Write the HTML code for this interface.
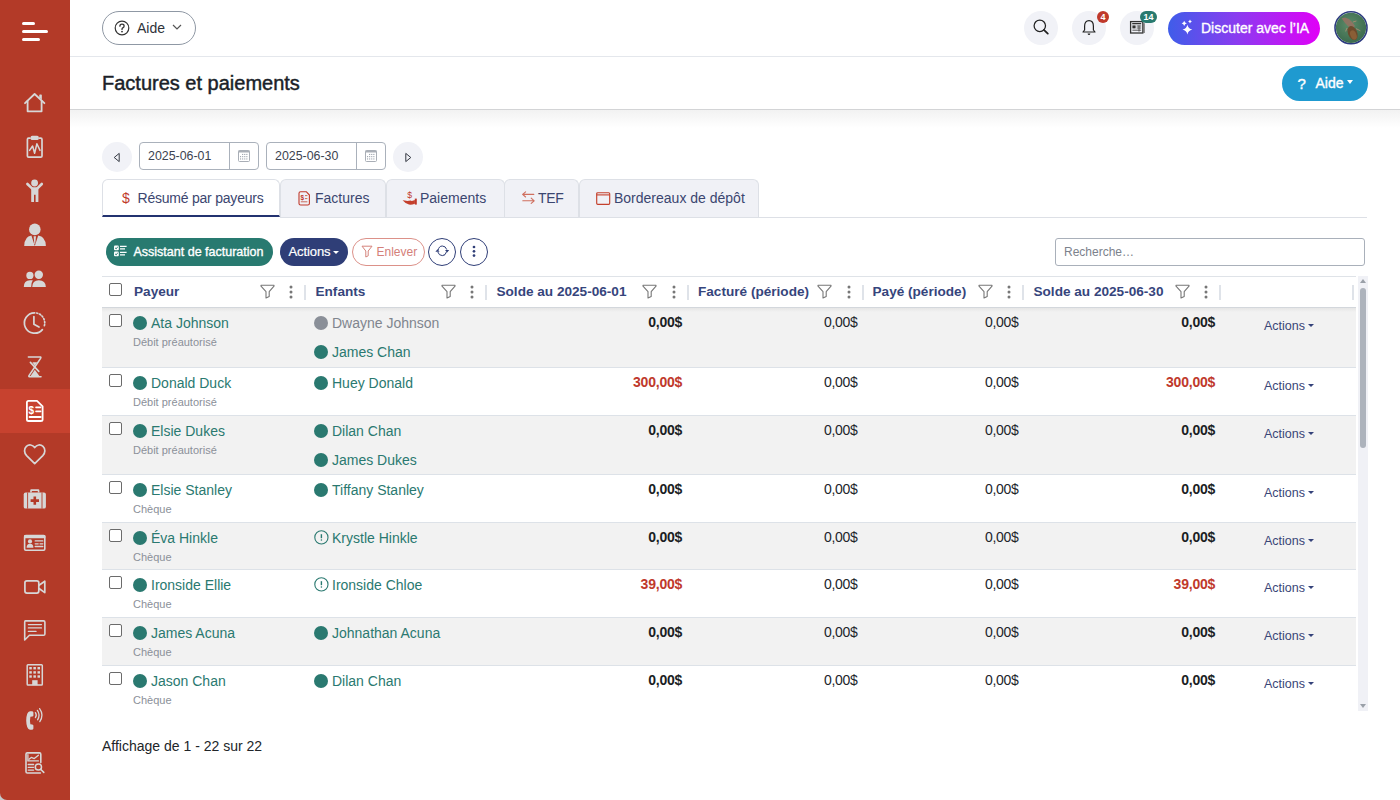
<!DOCTYPE html>
<html lang="fr">
<head>
<meta charset="utf-8">
<title>Factures et paiements</title>
<style>
*{box-sizing:border-box;margin:0;padding:0}
html,body{width:1400px;height:800px;overflow:hidden;background:#fff;font-family:"Liberation Sans",sans-serif;color:#212529}
.a{position:absolute}
.t{position:absolute;white-space:nowrap;line-height:1}
#sb{position:absolute;left:0;top:0;width:70px;height:800px;background:#b33a28;overflow:hidden;border-bottom-left-radius:7px}
#sb .on{position:absolute;left:0;top:389px;width:70px;height:44px;background:#c7422f}
.hdr{position:absolute;left:70px;top:0;width:1330px;height:57px;border-bottom:1px solid #e4e7ec;background:#fff}
.titlebar{position:absolute;left:70px;top:57px;width:1330px;height:53px;border-bottom:1px solid #d3d4d6;background:#fff}
.shadow{position:absolute;left:70px;top:110px;width:1330px;height:18px;background:linear-gradient(#f2f2f2,rgba(255,255,255,0))}
.circ{position:absolute;width:34px;height:34px;border-radius:50%;background:#f1f2f7}
.badge{position:absolute;height:12px;border-radius:6px;color:#fff;font-size:9px;font-weight:bold;line-height:12px;text-align:center}
/* date row */
.navc{position:absolute;width:30px;height:30px;border-radius:50%;background:#f1f2f7;top:142px}
.din{position:absolute;top:142px;height:28px;width:120px;border:1px solid #aab1bb;border-radius:4px;background:#fff}
.din .v{position:absolute;left:8px;top:7px;font-size:12.4px;color:#3c4350;line-height:1}
.din .dv{position:absolute;left:89px;top:0;width:1px;height:26px;background:#aab1bb}
.din svg{position:absolute;left:98px;top:7px}
/* tabs */
.tab{position:absolute;top:179px;height:38px;border:1px solid #dde0e6;border-bottom:none;border-radius:6px 6px 0 0;background:#f0f1f6;font-size:14px;color:#3b4670}
.tab .lab{position:absolute;top:11px;white-space:nowrap;line-height:1}
.tab svg{position:absolute}
.tabline{position:absolute;left:280px;top:217px;width:1087px;height:1px;background:#dde0e6;z-index:2}
/* toolbar */
.btn{position:absolute;top:238px;height:28px;border-radius:14px}
/* table */
.tbl{position:absolute;left:102px;top:276px;width:1254px;height:435px;overflow:hidden}
.thead{position:absolute;left:0;top:0;width:1254px;height:32px;border-top:1px solid #dfe3e8;border-bottom:1px solid #d3d7dc;background:#fff}
.thead .hl{position:absolute;top:7.7px;font-size:13.6px;font-weight:bold;color:#36457c;white-space:nowrap;line-height:1}
.thead .fi{position:absolute;top:7px}
.thead .dt{position:absolute;top:8px}
.thead .sep{position:absolute;top:8px;width:2px;height:15px;background:#dfe3e9}
.tshadow{position:absolute;left:0;top:32px;width:1254px;height:4px;background:linear-gradient(rgba(0,0,0,0.05),rgba(0,0,0,0));z-index:3}
.body{position:absolute;left:0;top:31px;width:1254px}
.row{position:absolute;left:0;width:1254px;border-bottom:1px solid #dde2e8}
.cb{position:absolute;left:7px;width:13px;height:13px;border:1px solid #6b6b6b;border-radius:2px;background:#fff}
.dot{position:absolute;width:14px;height:14px;border-radius:50%;background:#2a7970}
.warn{position:absolute}
.nm{position:absolute;font-size:14px;color:#2a7970;white-space:nowrap;line-height:1}
.meth{position:absolute;font-size:11px;color:#8b9099;white-space:nowrap;line-height:1}
.num{position:absolute;top:7px;font-size:14px;color:#22252b;white-space:nowrap;line-height:1;letter-spacing:-0.35px;margin-right:-0.35px}
.num.b{font-weight:bold;letter-spacing:-0.2px;margin-right:-0.2px}
.act{position:absolute;left:1162px;top:11.5px;font-size:12.5px;color:#3a4677;white-space:nowrap;line-height:1}
.caret{display:inline-block;margin-left:2.6px;vertical-align:2.5px;width:0;height:0;border-left:3.5px solid transparent;border-right:3.5px solid transparent;border-top:3.8px solid #34427a}
.sbar{position:absolute;left:1358px;top:276px;width:10px;height:435px;background:#f0f1f6}
</style>
</head>
<body>
<div class="a" style="left:0;top:790px;width:10px;height:10px;background:#c5cacd"></div>
<div id="sb">
  <div class="on"></div>
<svg width="70" height="800" viewBox="0 0 70 800" style="position:absolute;left:0;top:0" fill="none" stroke="#d7d7d7" stroke-linecap="round" stroke-linejoin="round">
  <!-- hamburger -->
  <g stroke="#fff" stroke-width="3">
    <line x1="23.5" y1="23.5" x2="33.5" y2="23.5"/>
    <line x1="23.5" y1="31.5" x2="46.5" y2="31.5"/>
    <line x1="23.5" y1="39.5" x2="38.5" y2="39.5"/>
  </g>
  <!-- home -->
  <g stroke-width="1.8">
    <path d="M25 103.2 L34.6 94 L44.4 103.2"/>
    <path d="M27.6 101 V111.3 H41.6 V101"/>
    <path d="M39.9 97.5 V95.2 H41.2 V98.8" fill="#d7d7d7" stroke-width="1.2"/>
  </g>
  <!-- clipboard pulse -->
  <g stroke-width="1.7">
    <path d="M30 138.2 H28.6 Q27.4 138.2 27.4 139.4 V156 Q27.4 157.1 28.6 157.1 H40.8 Q42 157.1 42 156 V139.4 Q42 138.2 40.8 138.2 H39.4"/>
    <rect x="31.4" y="136.6" width="6.6" height="2.6" rx="0.8" fill="#d7d7d7"/>
    <path d="M29.6 150.4 L32.6 146 L34.6 153.2 L36.9 143.8 L40 150.4" stroke-width="1.5"/>
  </g>
  <!-- person arms up -->
  <g fill="#d7d7d7" stroke="none">
    <circle cx="34.6" cy="183" r="3.4"/>
    <path d="M31.2 187.2 H38.4 V201.4 Q38.4 202 37.8 202 H35.6 V194.8 H34 V202 H31.8 Q31.2 202 31.2 201.4Z"/>
  </g>
  <g stroke="#d7d7d7" stroke-width="2.6">
    <path d="M27.4 184 L32 188.4"/>
    <path d="M41.8 184 L37.4 188.4"/>
  </g>
  <!-- user tie -->
  <g fill="#d7d7d7" stroke="none">
    <circle cx="34.8" cy="229.4" r="5.8"/>
    <path d="M24.2 245.9 Q24.6 236.4 31.4 235.6 L34.8 245.9 L38.2 235.6 Q45.4 236.4 45.9 245.9Z"/>
    <path d="M33.6 236.2 H36 L35.2 244 H34.4Z"/>
  </g>
  <!-- users -->
  <g fill="#d7d7d7" stroke="none">
    <circle cx="29.9" cy="275.4" r="3.6"/>
    <circle cx="38.8" cy="274.8" r="4.2"/>
    <path d="M23.8 286.9 Q23.8 280.4 30 280.2 H32.8 Q31.2 282.4 31.2 286.9Z"/>
    <path d="M32.2 286.9 Q32.4 280.3 38.8 280.2 Q45.6 280.3 45.9 286.9Z"/>
  </g>
  <!-- clock -->
  <g stroke-width="1.7">
    <path d="M34.6 312.8 A10.2 10.2 0 1 0 42.4 329.6"/>
    <path d="M36.6 313 A10.2 10.2 0 0 1 44.4 325.6" stroke-dasharray="1.2 1.9"/>
    <path d="M33.9 316.6 V324.2 L39 327"/>
  </g>
  <!-- hourglass -->
  <g stroke-width="1.6">
    <path d="M28.4 357 H40.6 Q41.2 357.4 40.6 358.4 L29 375.6 Q28.6 376.6 29.4 376.8 H41"/>
    <path d="M30.4 362.4 L38.8 371.4"/>
  </g>
  <g fill="#d7d7d7" stroke="none">
    <path d="M32.4 362.2 H37.2 L34.8 365.8Z"/>
    <path d="M34.8 369.8 L39.4 376 H30.6Z"/>
  </g>
  <!-- invoice active -->
  <g stroke="#fff" stroke-width="1.8">
    <path d="M37 400.9 H28.6 Q26.9 400.9 26.9 402.6 V419.4 Q26.9 421 28.6 421 H40.8 Q42.6 421 42.6 419.4 V406.4Z"/>
    <path d="M36 407.4 H40.6 M36 411.4 H40.6" stroke-width="1.6"/>
    <path d="M29.6 417 H40.6" stroke-width="2"/>
  </g>
  <text x="31.4" y="414" fill="#fff" stroke="none" font-family="Liberation Sans" font-weight="bold" font-size="10" text-anchor="middle">$</text>
  <!-- heart -->
  <path stroke-width="1.7" d="M34.7 447.6 C32.6 444.4 28.8 444.2 26.4 446.4 C23.8 448.8 24 452.8 26.6 455.6 L34.7 463.6 L42.8 455.6 C45.4 452.8 45.6 448.8 43 446.4 C40.6 444.2 36.8 444.4 34.7 447.6Z"/>
  <!-- medkit -->
  <g fill="#d7d7d7" stroke="none">
    <path d="M30.2 492.6 V490.4 Q30.2 489.3 31.3 489.3 H38.3 Q39.4 489.3 39.4 490.4 V492.6 H37.8 V491 H31.8 V492.6Z"/>
    <path d="M25.6 492.5 H44 Q45.9 492.5 45.9 494.4 V506.7 Q45.9 508.6 44 508.6 H25.6 Q23.7 508.6 23.7 506.7 V494.4 Q23.7 492.5 25.6 492.5Z"/>
  </g>
  <g stroke="#b33a28" stroke-linecap="butt">
    <path d="M27.6 492.5 V508.6 M42 492.5 V508.6" stroke-width="0.9"/>
    <path d="M34.8 496.4 V504.8 M30.6 500.6 H39" stroke-width="2.6"/>
  </g>
  <!-- id card -->
  <g stroke-width="1.6">
    <rect x="24.6" y="535.6" width="20.2" height="14.6" rx="1.2"/>
  </g>
  <g fill="#d7d7d7" stroke="none">
    <rect x="24" y="535" width="21.4" height="3.2" rx="1"/>
    <circle cx="30" cy="541.4" r="2.1"/>
    <path d="M26.6 547.8 Q26.6 543.8 30 543.8 Q33.4 543.8 33.4 547.8Z"/>
  </g>
  <g stroke-width="1.3">
    <path d="M35.2 540.9 H42.8 M35.2 543.8 H38.2 M40 543.8 H42.8 M35.2 546.5 H42.8"/>
  </g>
  <!-- video -->
  <g stroke-width="1.7">
    <rect x="24.9" y="580.8" width="13.9" height="12.3" rx="2"/>
    <path d="M39.4 585 L44.8 581.2 V592.6 L39.4 588.8"/>
  </g>
  <!-- chat -->
  <g stroke-width="1.6">
    <path d="M25.4 620.9 H43.6 Q44.9 620.9 44.9 622.2 V634 Q44.9 635.3 43.6 635.3 H29.4 L24.7 640 V622.2 Q24.7 620.9 25.4 620.9Z"/>
    <path d="M28.4 624.6 H41.4 M28.4 627.9 H41.4 M28.4 631.4 H36" stroke-width="1.4"/>
  </g>
  <!-- building -->
  <g stroke-width="1.5">
    <rect x="27.2" y="664.8" width="15.1" height="20.2" rx="0.8"/>
  </g>
  <g fill="#d7d7d7" stroke="none">
    <rect x="29.3" y="667" width="2.5" height="2.4"/><rect x="33.4" y="667" width="2.5" height="2.4"/><rect x="37.5" y="667" width="2.5" height="2.4"/>
    <rect x="29.3" y="671.2" width="2.5" height="2.4"/><rect x="33.4" y="671.2" width="2.5" height="2.4"/><rect x="37.5" y="671.2" width="2.5" height="2.4"/>
    <rect x="29.3" y="675.3" width="2.5" height="2.4"/><rect x="33.4" y="675.3" width="2.5" height="2.4"/><rect x="37.5" y="675.3" width="2.5" height="2.4"/>
    <rect x="32.2" y="680.2" width="5.4" height="5"/>
  </g>
  <!-- phone -->
  <g fill="#d7d7d7" stroke="none">
    <path d="M31.6 711.2 Q33.4 711.2 33.4 712.6 V715.4 Q33.4 716.4 32.2 716.6 L30.4 716.8 Q29.6 720.6 30.4 724.2 L32.2 724.4 Q33.4 724.6 33.4 725.6 V728.6 Q33.4 729.8 31.6 729.8 H30 Q26.4 729.2 26.2 720.4 Q26.4 711.8 30 711.2Z"/>
  </g>
  <g stroke-width="1.3" stroke-linecap="round">
    <path d="M35.4 712.6 Q37.2 715.2 35.4 717.6"/>
    <path d="M37.4 710.4 Q40.6 715 37.6 719.8"/>
    <path d="M39.6 708.6 Q44.2 715 39.8 721.6"/>
  </g>
  <!-- report -->
  <g stroke-width="1.6">
    <path d="M40.8 762.6 V754.2 Q40.8 752.9 39.5 752.9 H27.3 Q26 752.9 26 754.2 V771.7 Q26 773 27.3 773 H40.4"/>
    <path d="M27.9 754.6 V760.9 H38.4" stroke-width="1.3"/>
    <path d="M29 759.2 L31.3 757.4 L34.3 758.6 L38.4 755.2" stroke-width="1.3"/>
    <path d="M28.2 764.5 H33.6 M28.2 767.3 H33.6 M28.2 770.1 H33.6" stroke-width="1.3"/>
    <circle cx="38.4" cy="767" r="3.1" stroke-width="1.5"/>
    <path d="M40.6 769.3 L43.8 772.4" stroke-width="1.6"/>
  </g>
</svg>

</div>

<div class="hdr"></div>
<!-- header Aide pill -->
<div class="a" style="left:102px;top:11px;width:94px;height:34px;border:1px solid #8f98a4;border-radius:17px;background:#fff"></div>
<svg class="a" style="left:114px;top:20px" width="16" height="16" viewBox="0 0 16 16"><circle cx="8" cy="8" r="6.8" fill="none" stroke="#333" stroke-width="1.2"/><path d="M5.9 6.2 Q5.9 4.2 8 4.2 Q10.1 4.2 10.1 6 Q10.1 7.2 8.8 7.8 Q8 8.2 8 9.4" fill="none" stroke="#333" stroke-width="1.3" stroke-linecap="round"/><circle cx="8" cy="11.6" r="0.9" fill="#333"/></svg>
<div class="t" style="left:137px;top:21px;font-size:14px;color:#2f333a">Aide</div>
<svg class="a" style="left:172px;top:24px" width="10" height="7" viewBox="0 0 10 7"><path d="M1 1 L5 5 L9 1" fill="none" stroke="#555" stroke-width="1.2"/></svg>

<!-- top-right icons -->
<div class="circ" style="left:1024px;top:11px"></div>
<svg class="a" style="left:1032px;top:18px" width="18" height="18" viewBox="0 0 18 18"><circle cx="7.8" cy="7.8" r="5.7" fill="none" stroke="#222" stroke-width="1.25"/><path d="M11.9 11.9 L15.8 15.6" stroke="#222" stroke-width="1.8" stroke-linecap="round"/></svg>
<div class="circ" style="left:1072px;top:11px"></div>
<svg class="a" style="left:1082px;top:19px" width="14" height="17" viewBox="0 0 14 17"><path d="M7 1.6 Q11.4 1.6 11.4 7.2 V11 L13 13 H1 L2.6 11 V7.2 Q2.6 1.6 7 1.6Z" fill="none" stroke="#222" stroke-width="1.2" stroke-linejoin="round"/><path d="M5.6 14.4 H8.4 Q8.2 16 7 16 Q5.8 16 5.6 14.4Z" fill="#222"/></svg>
<div class="badge" style="left:1097px;top:11px;width:12px;background:#c0392b">4</div>
<div class="circ" style="left:1120px;top:11px"></div>
<svg class="a" style="left:1129px;top:20px" width="17" height="15" viewBox="0 0 17 15"><rect x="1.6" y="1.6" width="12.2" height="11.4" fill="none" stroke="#333" stroke-width="1.3"/><rect x="13.8" y="3.2" width="2" height="9.8" fill="#777"/><rect x="3.2" y="3" width="9" height="1.3" fill="#333"/><rect x="3.4" y="5.4" width="3.2" height="3" fill="#333"/><path d="M7.6 6 H12.2 M7.6 8 H12.2 M3.4 10.2 H12.2 M10 5.4 V11.6" stroke="#444" stroke-width="0.9"/></svg>
<div class="badge" style="left:1140px;top:11px;width:17px;background:#287a6f">14</div>

<div class="a" style="left:1168px;top:12px;width:152px;height:33px;border-radius:17px;background:linear-gradient(90deg,#3f5de9 0%,#8a3cf0 45%,#e100f7 100%)"></div>
<svg class="a" style="left:1179px;top:19px" width="17" height="17" viewBox="0 0 17 17"><path d="M8.4 5.699999999999999 Q9.282 9.718 13.3 10.6 Q9.282 11.482 8.4 15.5 Q7.518000000000001 11.482 3.5 10.6 Q7.518000000000001 9.718 8.4 5.699999999999999Z M5.2 1.6999999999999997 Q5.668 3.832 7.800000000000001 4.3 Q5.668 4.768 5.2 6.9 Q4.732 4.768 2.6 4.3 Q4.732 3.832 5.2 1.6999999999999997Z M11 0.6000000000000001 Q11.342 2.158 12.9 2.5 Q11.342 2.842 11 4.4 Q10.658 2.842 9.1 2.5 Q10.658 2.158 11 0.6000000000000001Z" fill="#fff"/></svg>
<div class="t" style="left:1201px;top:21px;font-size:14px;color:#fff;-webkit-text-stroke:0.35px #fff">Discuter avec l’IA</div>

<svg class="a" style="left:1333px;top:10px" width="36" height="36" viewBox="0 0 36 36">
  <defs><radialGradient id="ag" cx="45%" cy="40%" r="60%"><stop offset="0" stop-color="#5d8c6a"/><stop offset="1" stop-color="#3c6b4e"/></radialGradient></defs>
  <circle cx="18" cy="17.8" r="16" fill="#fff" stroke="#2c3a80" stroke-width="1.6"/>
  <circle cx="18" cy="17.8" r="15.1" fill="url(#ag)"/>
  <path d="M8.6 8.2 L12 7.4 L16 9 L19.6 12.4 L22 16 L20 18 L15.4 16.6 L12 13 Z" fill="#8d7462"/>
  <ellipse cx="19.6" cy="23" rx="4.6" ry="7.4" transform="rotate(-22 19.6 23)" fill="#6e4a2c"/>
  <ellipse cx="20.4" cy="25" rx="3" ry="4.8" transform="rotate(-22 20.4 25)" fill="#8a5e36"/>
  <path d="M23 18.6 L27.4 20.8 M14 18 L12.6 21.4 M20 12 L23.4 11" stroke="#a88a72" stroke-width="0.9"/>
</svg>

<!-- title bar -->
<div class="titlebar"></div>
<div class="shadow"></div>
<div class="t" style="left:102px;top:73px;font-size:20px;color:#1b1f29;-webkit-text-stroke:0.45px #1b1f29">Factures et paiements</div>
<div class="a" style="left:1282px;top:66px;width:86px;height:35px;border-radius:17.5px;background:#1f9ad0"></div>
<div class="t" style="left:1297.5px;top:75.5px;font-size:15px;color:#fff;-webkit-text-stroke:0.4px #fff">?</div>
<div class="t" style="left:1315.5px;top:76px;font-size:14px;color:#fff;-webkit-text-stroke:0.35px #fff">Aide</div>
<div class="a" style="left:1347.4px;top:80px;width:0;height:0;border-left:3.8px solid transparent;border-right:3.8px solid transparent;border-top:4.4px solid #fff"></div>

<!-- date row -->
<div class="navc" style="left:102px"></div>
<svg class="a" style="left:112px;top:152px" width="10" height="11" viewBox="0 0 10 11"><path d="M7.2 1.4 V9.6 L2.2 5.5Z" fill="none" stroke="#2b2f3a" stroke-width="0.95" stroke-linejoin="round"/></svg>
<div class="din" style="left:139px"><div class="v">2025-06-01</div><div class="dv"></div><svg width="12" height="12" viewBox="0 0 12 12"><rect x="0.5" y="0.5" width="11" height="11" rx="1" fill="none" stroke="#a9aeb6"/><rect x="0.5" y="0.5" width="11" height="2" fill="#a9aeb6"/><rect x="4.1" y="3.9" width="1.1" height="1.1" fill="#9aa0aa"/><rect x="6.2" y="3.9" width="1.1" height="1.1" fill="#9aa0aa"/><rect x="8.3" y="3.9" width="1.1" height="1.1" fill="#9aa0aa"/><rect x="2" y="6.1" width="1.1" height="1.1" fill="#9aa0aa"/><rect x="4.1" y="6.1" width="1.1" height="1.1" fill="#9aa0aa"/><rect x="6.2" y="6.1" width="1.1" height="1.1" fill="#9aa0aa"/><rect x="8.3" y="6.1" width="1.1" height="1.1" fill="#9aa0aa"/><rect x="2" y="8.4" width="1.1" height="1.1" fill="#9aa0aa"/><rect x="4.1" y="8.4" width="1.1" height="1.1" fill="#9aa0aa"/><rect x="6.2" y="8.4" width="1.1" height="1.1" fill="#9aa0aa"/><rect x="8.3" y="8.4" width="1.1" height="1.1" fill="#9aa0aa"/></svg></div>
<div class="din" style="left:266px"><div class="v">2025-06-30</div><div class="dv"></div><svg width="12" height="12" viewBox="0 0 12 12"><rect x="0.5" y="0.5" width="11" height="11" rx="1" fill="none" stroke="#a9aeb6"/><rect x="0.5" y="0.5" width="11" height="2" fill="#a9aeb6"/><rect x="4.1" y="3.9" width="1.1" height="1.1" fill="#9aa0aa"/><rect x="6.2" y="3.9" width="1.1" height="1.1" fill="#9aa0aa"/><rect x="8.3" y="3.9" width="1.1" height="1.1" fill="#9aa0aa"/><rect x="2" y="6.1" width="1.1" height="1.1" fill="#9aa0aa"/><rect x="4.1" y="6.1" width="1.1" height="1.1" fill="#9aa0aa"/><rect x="6.2" y="6.1" width="1.1" height="1.1" fill="#9aa0aa"/><rect x="8.3" y="6.1" width="1.1" height="1.1" fill="#9aa0aa"/><rect x="2" y="8.4" width="1.1" height="1.1" fill="#9aa0aa"/><rect x="4.1" y="8.4" width="1.1" height="1.1" fill="#9aa0aa"/><rect x="6.2" y="8.4" width="1.1" height="1.1" fill="#9aa0aa"/><rect x="8.3" y="8.4" width="1.1" height="1.1" fill="#9aa0aa"/></svg></div>
<div class="navc" style="left:393px"></div>
<svg class="a" style="left:403px;top:152px" width="10" height="11" viewBox="0 0 10 11"><path d="M2.8 1.4 V9.6 L7.8 5.5Z" fill="none" stroke="#2b2f3a" stroke-width="0.95" stroke-linejoin="round"/></svg>

<!-- tabs -->
<div class="tabline"></div>
<div class="tab" style="left:102px;width:178px;background:#fff;border-bottom:2px solid #233270;height:38px">
  <div class="lab" style="left:19px;color:#c0392b">$</div>
  <div class="lab" style="left:34.5px;letter-spacing:-0.22px">Résumé par payeurs</div>
</div>
<div class="tab" style="left:280px;width:106px">
  <svg style="left:17px;top:11px" width="13" height="16" viewBox="0 0 13 16"><path d="M8.2 0.7 H2.6 Q1 0.7 1 2.3 V12.4 Q1 14 2.6 14 H9.8 Q11.4 14 11.4 12.4 V4Z" fill="none" stroke="#c0392b" stroke-width="1.1" stroke-linejoin="round"/><path d="M7 4.6 H9.4 M7 7.6 H9.4" stroke="#d0704f" stroke-width="1"/><path d="M2.8 10.8 H9.4" stroke="#c86a5c" stroke-width="1"/><text x="4.2" y="9.2" font-size="6.4" font-weight="bold" fill="#c0392b" text-anchor="middle" font-family="Liberation Sans">$</text></svg>
  <div class="lab" style="left:34px">Factures</div>
</div>
<div class="tab" style="left:386px;width:119px">
  <svg style="left:15px;top:10px" width="17" height="17" viewBox="0 0 17 17"><text x="7.6" y="8" font-size="8.6" fill="#c0392b" text-anchor="middle" font-family="Liberation Sans">$</text><path d="M0.6 10.2 Q2.8 10.2 5.2 11 L8.6 10.4 Q9.9 10.5 9.4 11.5 L6.8 12 L12.9 10 V13.8 Q9.6 15 7 14.6 Q3.6 13.8 0.6 10.2Z" fill="#c4402c"/><rect x="12.8" y="8.6" width="2" height="6" fill="#c0392b"/></svg>
  <div class="lab" style="left:33px">Paiements</div>
</div>
<div class="tab" style="left:504px;width:75px">
  <svg style="left:15.5px;top:11px" width="16" height="15" viewBox="0 0 16 15"><path d="M12.8 3.4 H1.8 M4.6 0.8 L1.6 3.4 L4.6 6 M1.8 9.8 H12.8 M10.2 7.2 L13.2 9.8 L10.2 12.4" fill="none" stroke="#cf6f5e" stroke-width="1.1" stroke-linecap="round" stroke-linejoin="round"/></svg>
  <div class="lab" style="left:33px;letter-spacing:-0.3px">TEF</div>
</div>
<div class="tab" style="left:579px;width:180px">
  <svg style="left:16px;top:12px" width="15" height="14" viewBox="0 0 15 14"><rect x="0.7" y="0.7" width="13" height="11.6" rx="1" fill="none" stroke="#c4402c" stroke-width="1.15"/><path d="M0.7 2.9 H13.7" stroke="#c4402c" stroke-width="1.1"/></svg>
  <div class="lab" style="left:34px">Bordereaux de dépôt</div>
</div>

<!-- toolbar -->
<div class="btn" style="left:106px;width:167px;background:#287a70"></div>
<svg class="a" style="left:114px;top:245px" width="13" height="12" viewBox="0 0 13 12"><rect x="0" y="0.4" width="4.8" height="4.8" rx="1" fill="#fff"/><rect x="0" y="6.4" width="4.8" height="4.8" rx="1" fill="#fff"/><path d="M1 2.8 L2.2 3.9 L3.9 1.6 M1 8.8 L2.2 9.9 L3.9 7.6" fill="none" stroke="#287a70" stroke-width="0.9"/><path d="M6 1.4 H12.6 M6 3.8 H11 M6 7.4 H12.6 M6 9.8 H11" stroke="#fff" stroke-width="1.3"/></svg>
<div class="t" style="left:133.5px;top:246px;font-size:12.5px;color:#fff;-webkit-text-stroke:0.35px #fff">Assistant de facturation</div>

<div class="btn" style="left:280px;width:68px;background:#2f3e77"></div>
<div class="t" style="left:288.5px;top:245px;font-size:13px;color:#fff;letter-spacing:-0.1px;-webkit-text-stroke:0.2px #fff">Actions</div>
<div class="a" style="left:333px;top:251px;width:0;height:0;border-left:3.3px solid transparent;border-right:3.3px solid transparent;border-top:3.6px solid #fff"></div>

<div class="btn" style="left:352px;width:73px;border:1px solid #dc9189;background:#fff"></div>
<svg class="a" style="left:361px;top:245px" width="12" height="13" viewBox="0 0 12 13"><path d="M1 1.2 H11 L7.2 6 V10.8 L4.8 12 V6Z" fill="none" stroke="#d5837b" stroke-width="1" stroke-linejoin="round"/></svg>
<div class="t" style="left:376.5px;top:246px;font-size:12px;color:#d4807a">Enlever</div>

<div class="btn" style="left:428px;width:28px;border:1px solid #2f3e77;background:#fff"></div>
<svg class="a" style="left:434px;top:244px" width="16" height="14" viewBox="0 0 16 14"><path d="M4 6.4 Q5 2 8.3 2 Q11.6 2 12.8 5.6" fill="none" stroke="#2f3e77" stroke-width="1"/><path d="M12.6 7.6 Q11.6 11.6 8.3 11.6 Q5 11.6 3.8 8" fill="none" stroke="#2f3e77" stroke-width="1"/><path d="M11 6 L15.2 6 L13.1 8.6Z M1.4 7.8 L5.6 7.8 L3.5 5.2Z" fill="#2f3e77"/></svg>
<div class="btn" style="left:460px;width:28px;border:1px solid #2f3e77;background:#fff"></div>
<svg class="a" style="left:472px;top:244.6px" width="4" height="13" viewBox="0 0 4 13"><circle cx="2" cy="2" r="1.35" fill="#2f3e77"/><circle cx="2" cy="6.3" r="1.35" fill="#2f3e77"/><circle cx="2" cy="10.6" r="1.35" fill="#2f3e77"/></svg>

<div class="a" style="left:1055px;top:238px;width:310px;height:28px;border:1px solid #a9b0ba;border-radius:3px;background:#fff"></div>
<div class="t" style="left:1064px;top:246px;font-size:12px;color:#7c828c">Recherche…</div>

<!-- table -->
<div class="tbl">
  <div class="body" style="top:0">
<div class="row" style="top:32.0px;height:60.0px;background:#f2f2f2">
<div class="cb" style="top:6px"></div>
<div class="dot" style="left:31px;top:7.5px"></div>
<div class="nm" style="left:49px;top:8px">Ata Johnson</div>
<div class="meth" style="left:31px;top:29px">Débit préautorisé</div>
<div class="dot" style="left:212px;top:8px;background:#8a8f98"></div>
<div class="nm" style="left:230px;top:8px;color:#80858e">Dwayne Johnson</div>
<div class="dot" style="left:212px;top:37px;background:#2a7970"></div>
<div class="nm" style="left:230px;top:37px;color:#2a7970">James Chan</div>
<div class="num b" style="right:674px;color:#1b1e24">0,00$</div>
<div class="num" style="right:499px">0,00$</div>
<div class="num" style="right:338px">0,00$</div>
<div class="num b" style="right:141px;color:#1b1e24">0,00$</div>
<div class="act">Actions<span class="caret"></span></div>
</div>
<div class="row" style="top:92.0px;height:48.0px;background:#fff">
<div class="cb" style="top:6px"></div>
<div class="dot" style="left:31px;top:7.5px"></div>
<div class="nm" style="left:49px;top:8px">Donald Duck</div>
<div class="meth" style="left:31px;top:29px">Débit préautorisé</div>
<div class="dot" style="left:212px;top:8px;background:#2a7970"></div>
<div class="nm" style="left:230px;top:8px;color:#2a7970">Huey Donald</div>
<div class="num b" style="right:674px;color:#c0392b">300,00$</div>
<div class="num" style="right:499px">0,00$</div>
<div class="num" style="right:338px">0,00$</div>
<div class="num b" style="right:141px;color:#c0392b">300,00$</div>
<div class="act">Actions<span class="caret"></span></div>
</div>
<div class="row" style="top:140.0px;height:59.0px;background:#f2f2f2">
<div class="cb" style="top:6px"></div>
<div class="dot" style="left:31px;top:7.5px"></div>
<div class="nm" style="left:49px;top:8px">Elsie Dukes</div>
<div class="meth" style="left:31px;top:29px">Débit préautorisé</div>
<div class="dot" style="left:212px;top:8px;background:#2a7970"></div>
<div class="nm" style="left:230px;top:8px;color:#2a7970">Dilan Chan</div>
<div class="dot" style="left:212px;top:37px;background:#2a7970"></div>
<div class="nm" style="left:230px;top:37px;color:#2a7970">James Dukes</div>
<div class="num b" style="right:674px;color:#1b1e24">0,00$</div>
<div class="num" style="right:499px">0,00$</div>
<div class="num" style="right:338px">0,00$</div>
<div class="num b" style="right:141px;color:#1b1e24">0,00$</div>
<div class="act">Actions<span class="caret"></span></div>
</div>
<div class="row" style="top:199.0px;height:48.0px;background:#fff">
<div class="cb" style="top:6px"></div>
<div class="dot" style="left:31px;top:7.5px"></div>
<div class="nm" style="left:49px;top:8px">Elsie Stanley</div>
<div class="meth" style="left:31px;top:29px">Chèque</div>
<div class="dot" style="left:212px;top:8px;background:#2a7970"></div>
<div class="nm" style="left:230px;top:8px;color:#2a7970">Tiffany Stanley</div>
<div class="num b" style="right:674px;color:#1b1e24">0,00$</div>
<div class="num" style="right:499px">0,00$</div>
<div class="num" style="right:338px">0,00$</div>
<div class="num b" style="right:141px;color:#1b1e24">0,00$</div>
<div class="act">Actions<span class="caret"></span></div>
</div>
<div class="row" style="top:247.0px;height:47.0px;background:#f2f2f2">
<div class="cb" style="top:6px"></div>
<div class="dot" style="left:31px;top:7.5px"></div>
<div class="nm" style="left:49px;top:8px">Éva Hinkle</div>
<div class="meth" style="left:31px;top:29px">Chèque</div>
<svg class="warn" style="left:212px;top:6.8px" width="15" height="15" viewBox="0 0 15 15"><circle cx="7.4" cy="7.4" r="6.6" fill="none" stroke="#2a7970" stroke-width="1.1"/><path d="M7.4 4.2 V8.2" stroke="#2a7970" stroke-width="1.4"/><circle cx="7.4" cy="10" r="0.8" fill="#2a7970"/></svg>
<div class="nm" style="left:230px;top:8px;color:#2a7970">Krystle Hinkle</div>
<div class="num b" style="right:674px;color:#1b1e24">0,00$</div>
<div class="num" style="right:499px">0,00$</div>
<div class="num" style="right:338px">0,00$</div>
<div class="num b" style="right:141px;color:#1b1e24">0,00$</div>
<div class="act">Actions<span class="caret"></span></div>
</div>
<div class="row" style="top:294.0px;height:48.0px;background:#fff">
<div class="cb" style="top:6px"></div>
<div class="dot" style="left:31px;top:7.5px"></div>
<div class="nm" style="left:49px;top:8px">Ironside Ellie</div>
<div class="meth" style="left:31px;top:29px">Chèque</div>
<svg class="warn" style="left:212px;top:6.8px" width="15" height="15" viewBox="0 0 15 15"><circle cx="7.4" cy="7.4" r="6.6" fill="none" stroke="#2a7970" stroke-width="1.1"/><path d="M7.4 4.2 V8.2" stroke="#2a7970" stroke-width="1.4"/><circle cx="7.4" cy="10" r="0.8" fill="#2a7970"/></svg>
<div class="nm" style="left:230px;top:8px;color:#2a7970">Ironside Chloe</div>
<div class="num b" style="right:674px;color:#c0392b">39,00$</div>
<div class="num" style="right:499px">0,00$</div>
<div class="num" style="right:338px">0,00$</div>
<div class="num b" style="right:141px;color:#c0392b">39,00$</div>
<div class="act">Actions<span class="caret"></span></div>
</div>
<div class="row" style="top:342.0px;height:48.0px;background:#f2f2f2">
<div class="cb" style="top:6px"></div>
<div class="dot" style="left:31px;top:7.5px"></div>
<div class="nm" style="left:49px;top:8px">James Acuna</div>
<div class="meth" style="left:31px;top:29px">Chèque</div>
<div class="dot" style="left:212px;top:8px;background:#2a7970"></div>
<div class="nm" style="left:230px;top:8px;color:#2a7970">Johnathan Acuna</div>
<div class="num b" style="right:674px;color:#1b1e24">0,00$</div>
<div class="num" style="right:499px">0,00$</div>
<div class="num" style="right:338px">0,00$</div>
<div class="num b" style="right:141px;color:#1b1e24">0,00$</div>
<div class="act">Actions<span class="caret"></span></div>
</div>
<div class="row" style="top:390.0px;height:60.0px;background:#fff">
<div class="cb" style="top:6px"></div>
<div class="dot" style="left:31px;top:7.5px"></div>
<div class="nm" style="left:49px;top:8px">Jason Chan</div>
<div class="meth" style="left:31px;top:29px">Chèque</div>
<div class="dot" style="left:212px;top:8px;background:#2a7970"></div>
<div class="nm" style="left:230px;top:8px;color:#2a7970">Dilan Chan</div>
<div class="num b" style="right:674px;color:#1b1e24">0,00$</div>
<div class="num" style="right:499px">0,00$</div>
<div class="num" style="right:338px">0,00$</div>
<div class="num b" style="right:141px;color:#1b1e24">0,00$</div>
<div class="act">Actions<span class="caret"></span></div>
</div>
  </div>
  <div class="thead">
    <div class="cb" style="left:7px;top:6px"></div>
<div class="hl" style="left:32px">Payeur</div>
<svg class="fi" style="left:158px" width="15" height="15" viewBox="0 0 15 15"><path d="M1 1.2 H14 V2.2 L9.2 7.6 V12.6 L6 14 V7.6 L1 2.2Z" fill="none" stroke="#777" stroke-width="1.1" stroke-linejoin="round"/></svg>
<svg class="dt" style="left:187px" width="4" height="14" viewBox="0 0 4 14"><circle cx="2" cy="2" r="1.5" fill="#777"/><circle cx="2" cy="7" r="1.5" fill="#777"/><circle cx="2" cy="12" r="1.5" fill="#777"/></svg>
<div class="sep" style="left:201.5px"></div>
<div class="hl" style="left:213.5px">Enfants</div>
<svg class="fi" style="left:339px" width="15" height="15" viewBox="0 0 15 15"><path d="M1 1.2 H14 V2.2 L9.2 7.6 V12.6 L6 14 V7.6 L1 2.2Z" fill="none" stroke="#777" stroke-width="1.1" stroke-linejoin="round"/></svg>
<svg class="dt" style="left:368px" width="4" height="14" viewBox="0 0 4 14"><circle cx="2" cy="2" r="1.5" fill="#777"/><circle cx="2" cy="7" r="1.5" fill="#777"/><circle cx="2" cy="12" r="1.5" fill="#777"/></svg>
<div class="sep" style="left:383px"></div>
<div class="hl" style="left:394.5px">Solde au 2025-06-01</div>
<svg class="fi" style="left:540px" width="15" height="15" viewBox="0 0 15 15"><path d="M1 1.2 H14 V2.2 L9.2 7.6 V12.6 L6 14 V7.6 L1 2.2Z" fill="none" stroke="#777" stroke-width="1.1" stroke-linejoin="round"/></svg>
<svg class="dt" style="left:569.5px" width="4" height="14" viewBox="0 0 4 14"><circle cx="2" cy="2" r="1.5" fill="#777"/><circle cx="2" cy="7" r="1.5" fill="#777"/><circle cx="2" cy="12" r="1.5" fill="#777"/></svg>
<div class="sep" style="left:584.5px"></div>
<div class="hl" style="left:596px">Facturé (période)</div>
<svg class="fi" style="left:715px" width="15" height="15" viewBox="0 0 15 15"><path d="M1 1.2 H14 V2.2 L9.2 7.6 V12.6 L6 14 V7.6 L1 2.2Z" fill="none" stroke="#777" stroke-width="1.1" stroke-linejoin="round"/></svg>
<svg class="dt" style="left:744.5px" width="4" height="14" viewBox="0 0 4 14"><circle cx="2" cy="2" r="1.5" fill="#777"/><circle cx="2" cy="7" r="1.5" fill="#777"/><circle cx="2" cy="12" r="1.5" fill="#777"/></svg>
<div class="sep" style="left:759.5px"></div>
<div class="hl" style="left:770.5px">Payé (période)</div>
<svg class="fi" style="left:876px" width="15" height="15" viewBox="0 0 15 15"><path d="M1 1.2 H14 V2.2 L9.2 7.6 V12.6 L6 14 V7.6 L1 2.2Z" fill="none" stroke="#777" stroke-width="1.1" stroke-linejoin="round"/></svg>
<svg class="dt" style="left:905px" width="4" height="14" viewBox="0 0 4 14"><circle cx="2" cy="2" r="1.5" fill="#777"/><circle cx="2" cy="7" r="1.5" fill="#777"/><circle cx="2" cy="12" r="1.5" fill="#777"/></svg>
<div class="sep" style="left:920px"></div>
<div class="hl" style="left:931.5px">Solde au 2025-06-30</div>
<svg class="fi" style="left:1072.5px" width="15" height="15" viewBox="0 0 15 15"><path d="M1 1.2 H14 V2.2 L9.2 7.6 V12.6 L6 14 V7.6 L1 2.2Z" fill="none" stroke="#777" stroke-width="1.1" stroke-linejoin="round"/></svg>
<svg class="dt" style="left:1101.5px" width="4" height="14" viewBox="0 0 4 14"><circle cx="2" cy="2" r="1.5" fill="#777"/><circle cx="2" cy="7" r="1.5" fill="#777"/><circle cx="2" cy="12" r="1.5" fill="#777"/></svg>
<div class="sep" style="left:1116.5px"></div>
<div class="sep" style="left:1250px"></div>
  </div>
  <div class="tshadow"></div>
</div>
<div class="sbar"></div>
<div class="a" style="left:1360px;top:288px;width:6px;height:160px;border-radius:3px;background:#adb3bc"></div>
<div class="a" style="left:1359.5px;top:279px;width:0;height:0;border-left:3.5px solid transparent;border-right:3.5px solid transparent;border-bottom:4px solid #9aa0a8"></div>
<div class="a" style="left:1359.5px;top:704px;width:0;height:0;border-left:3.5px solid transparent;border-right:3.5px solid transparent;border-top:4px solid #9aa0a8"></div>

<div class="t" style="left:102px;top:739px;font-size:14px;color:#212529">Affichage de 1 - 22 sur 22</div>
</body>
</html>
